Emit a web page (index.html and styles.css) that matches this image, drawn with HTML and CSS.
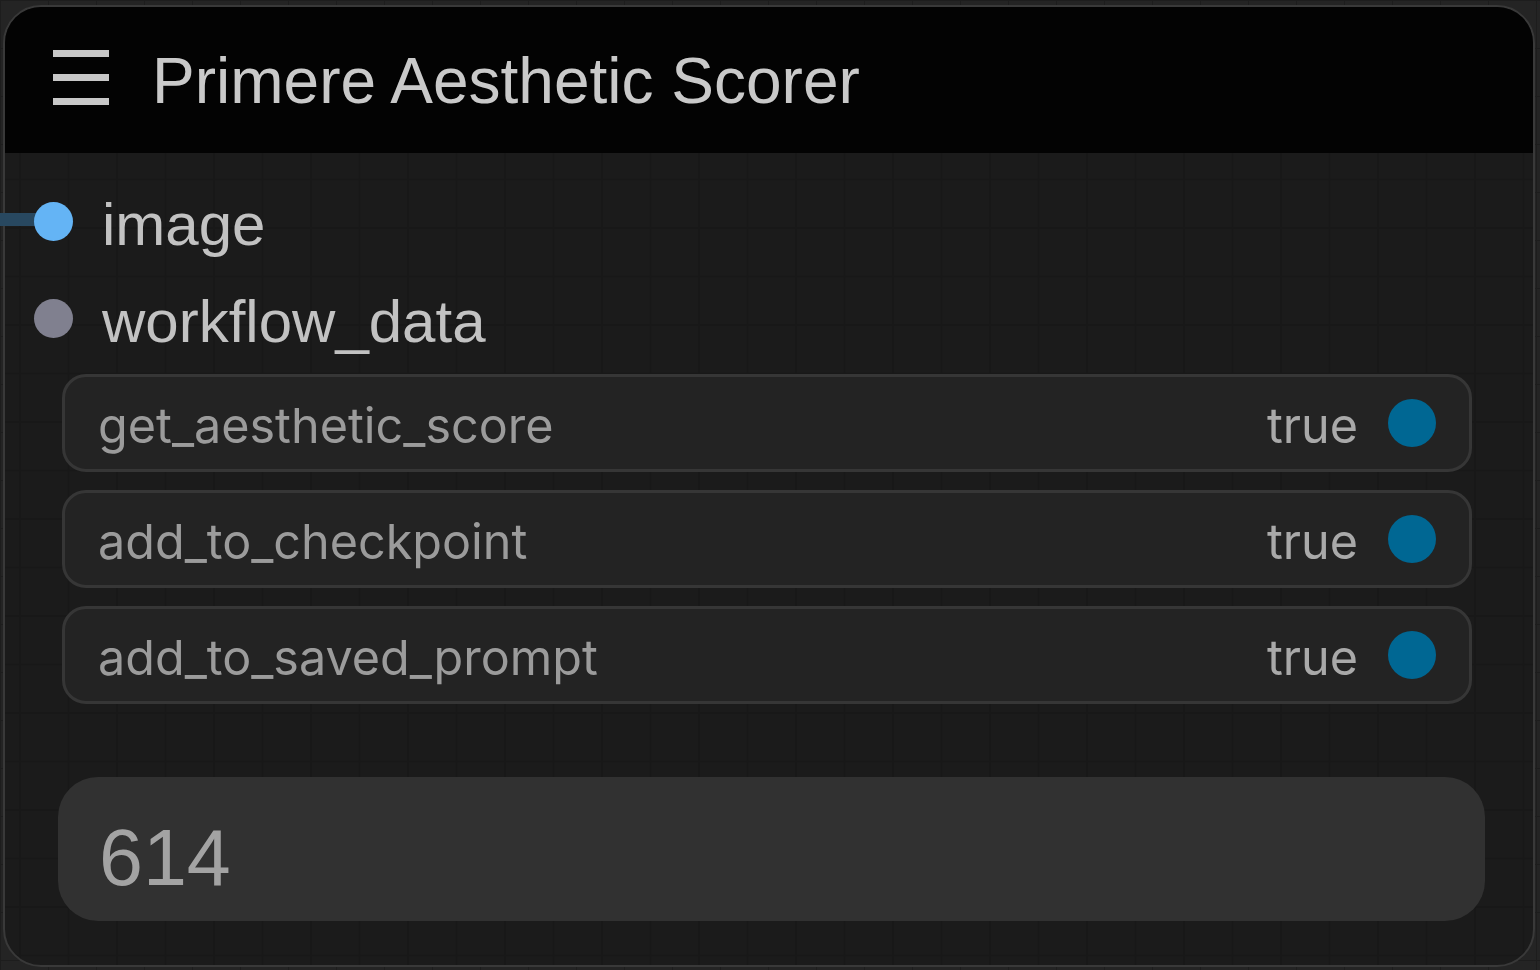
FILE: index.html
```html
<!DOCTYPE html>
<html>
<head>
<meta charset="utf-8">
<link rel="stylesheet" href="styles.css">
</head>
<body>
<div class="canvas">
  <div class="link"></div>
  <div class="node">
    <div class="header">
      <div class="menu"><span></span><span></span><span></span></div>
      <div class="title">Primere Aesthetic Scorer</div>
    </div>
    <div class="body">
      <div class="inputs">
        <div class="input"><span class="slot slot-image"></span><span class="label">image</span></div>
        <div class="input"><span class="slot slot-data"></span><span class="label">workflow_data</span></div>
      </div>
      <div class="widgets">
        <div class="widget"><span class="wlabel">get_aesthetic_score</span><span class="wvalue">true</span><span class="toggle"></span></div>
        <div class="widget"><span class="wlabel">add_to_checkpoint</span><span class="wvalue">true</span><span class="toggle"></span></div>
        <div class="widget"><span class="wlabel">add_to_saved_prompt</span><span class="wvalue">true</span><span class="toggle"></span></div>
      </div>
      <div class="field">614</div>
    </div>
  </div>
</div>
</body>
</html>
```

FILE: styles.css
```css
html, body {
  margin: 0;
  padding: 0;
  width: 1540px;
  height: 970px;
  overflow: hidden;
  background: #232323;
}

.canvas {
  position: relative;
  width: 1540px;
  height: 970px;
  padding: 5px 5px 0 3px;
  box-sizing: border-box;
  background-color: #242424;
  background-image:
    linear-gradient(to right, #1d1d1d 1px, transparent 1px),
    linear-gradient(to bottom, #1d1d1d 1px, transparent 1px);
  background-size: 48px 48px;
}

.link {
  position: absolute;
  z-index: 1;
  left: 0;
  top: 213px;
  width: 36px;
  height: 13px;
  background: #284860;
}

.node {
  position: relative;
  height: 962px;
  border: 2px solid #393939;
  border-radius: 38px;
  overflow: hidden;
  box-sizing: border-box;
  display: flex;
  flex-direction: column;
  background-color: #1b1b1b;
  background-image:
    linear-gradient(to right, #181818 2px, transparent 2px),
    linear-gradient(to bottom, #181818 2px, transparent 2px);
  background-size: 48.5px 48.5px;
  background-position: 14px 26px;
}

.header {
  height: 146px;
  flex: none;
  background: #030303;
  display: flex;
  align-items: center;
  padding-left: 48px;
}

.menu {
  display: flex;
  flex-direction: column;
  gap: 17px;
  width: 56px;
  margin-top: -5px;
}
.menu span {
  display: block;
  height: 7px;
  background: #c8c8c8;
}

.title {
  margin-left: 43px;
  font-family: "Liberation Sans", Arial, sans-serif;
  font-size: 64px;
  color: #c9c9c9;
  line-height: 1;
  margin-top: 2px;
}

.body {
  flex: 1;
  display: flex;
  flex-direction: column;
}

.inputs {
  padding-top: 20px;
  display: flex;
  flex-direction: column;
}

.input {
  height: 97px;
  display: flex;
  align-items: center;
  padding-left: 29px;
}

.slot {
  position: relative;
  z-index: 2;
  width: 39px;
  height: 39px;
  border-radius: 50%;
  flex: none;
}
.slot-image { background: #64b4f5; }
.slot-data { background: #80808f; }

.label {
  margin-left: 29px;
  font-family: "Liberation Sans", Arial, sans-serif;
  font-size: 60px;
  color: #c2c2c2;
  line-height: 1;
  margin-top: 6px;
}

.widgets {
  margin-top: 7px;
  display: flex;
  flex-direction: column;
  gap: 18px;
  padding: 0 61px 0 57px;
}

.widget {
  height: 98px;
  box-sizing: border-box;
  border: 3px solid #363636;
  border-radius: 24px;
  background: #232323;
  display: flex;
  align-items: center;
  padding: 0 33px 0 33px;
  font-family: Inter, "Liberation Sans", sans-serif;
  font-size: 48.5px;
}

.wlabel {
  flex: 1;
  color: #9b9b9b;
  margin-top: 4px;
}
.wvalue {
  color: #a9a9a9;
  margin-right: 30px;
  margin-top: 4px;
}
.toggle {
  width: 48px;
  height: 48px;
  border-radius: 50%;
  background: #006793;
  flex: none;
}

.field {
  margin: 73px 48px 0 53px;
  height: 144px;
  border-radius: 40px;
  background: #313131;
  display: flex;
  align-items: center;
  padding-left: 41px;
  font-family: "Liberation Sans", Arial, sans-serif;
  font-size: 79px;
  color: #a3a3a3;
  line-height: 1;
  padding-top: 16px;
  box-sizing: border-box;
}
```
